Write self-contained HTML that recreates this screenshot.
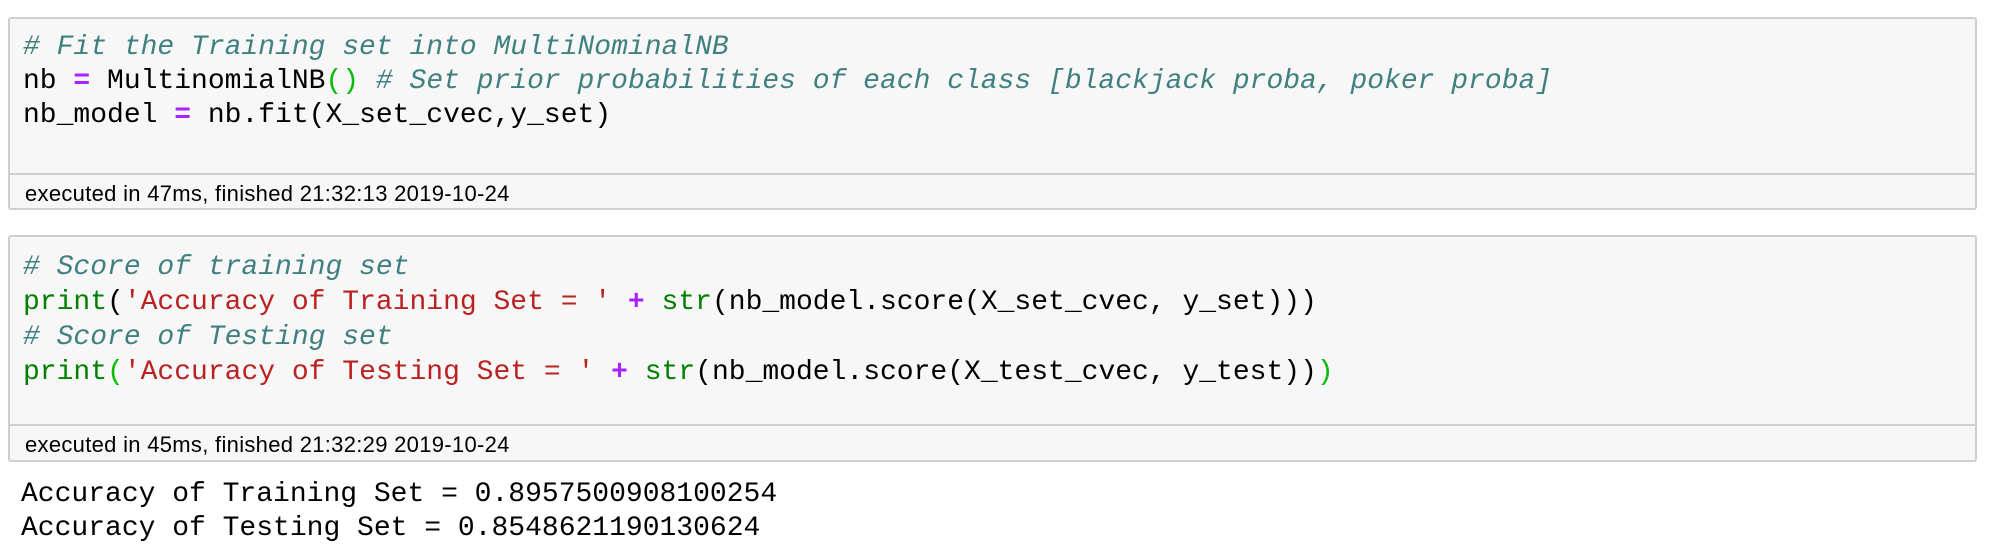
<!DOCTYPE html>
<html><head><style>
html,body{margin:0;padding:0;background:#fff;width:1990px;height:558px;overflow:hidden;position:relative}
.cell{position:absolute;left:8px;width:1969px;background:#f7f7f7;border:2px solid #cfcfcf;border-radius:3px;box-sizing:border-box}
.sep{position:absolute;left:0;right:0;height:2px;background:#cfcfcf}
.line{position:absolute;left:13px;font-family:"Liberation Mono",monospace;font-size:28px;line-height:34px;white-space:pre;color:#000}
.out{position:absolute;left:21px;font-family:"Liberation Mono",monospace;font-size:28px;line-height:34px;white-space:pre;color:#000}
.foot{position:absolute;left:15px;font-family:"Liberation Sans",sans-serif;font-size:22px;line-height:24px;white-space:pre;color:#000;letter-spacing:0.3px}
.c{color:#408080;font-style:italic}
.o{color:#aa22ff;font-weight:bold}
.g{color:#008000}
.gb{color:#00bb00}
.s{color:#ba2121}
</style></head><body>
<div class="cell" style="top:17px;height:193px">
  <div class="line" style="top:12px"><span class="c"># Fit the Training set into MultiNominalNB</span></div>
  <div class="line" style="top:46px">nb <span class="o">=</span> MultinomialNB<span class="gb">()</span> <span class="c"># Set prior probabilities of each class [blackjack proba, poker proba]</span></div>
  <div class="line" style="top:80px">nb_model <span class="o">=</span> nb.fit(X_set_cvec,y_set)</div>
  <div class="sep" style="top:154px"></div>
  <div class="foot" style="top:163px">executed in 47ms, finished 21:32:13 2019-10-24</div>
</div>
<div class="cell" style="top:235px;height:227px">
  <div class="line" style="top:14px"><span class="c"># Score of training set</span></div>
  <div class="line" style="top:49px"><span class="g">print</span>(<span class="s">'Accuracy of Training Set = '</span> <span class="o">+</span> <span class="g">str</span>(nb_model.score(X_set_cvec, y_set)))</div>
  <div class="line" style="top:84px"><span class="c"># Score of Testing set</span></div>
  <div class="line" style="top:119px"><span class="g">print</span><span class="gb">(</span><span class="s">'Accuracy of Testing Set = '</span> <span class="o">+</span> <span class="g">str</span>(nb_model.score(X_test_cvec, y_test))<span class="gb">)</span></div>
  <div class="sep" style="top:187px"></div>
  <div class="foot" style="top:196px">executed in 45ms, finished 21:32:29 2019-10-24</div>
</div>
<div class="out" style="top:478px">Accuracy of Training Set = 0.8957500908100254</div>
<div class="out" style="top:512px">Accuracy of Testing Set = 0.8548621190130624</div>
</body></html>
